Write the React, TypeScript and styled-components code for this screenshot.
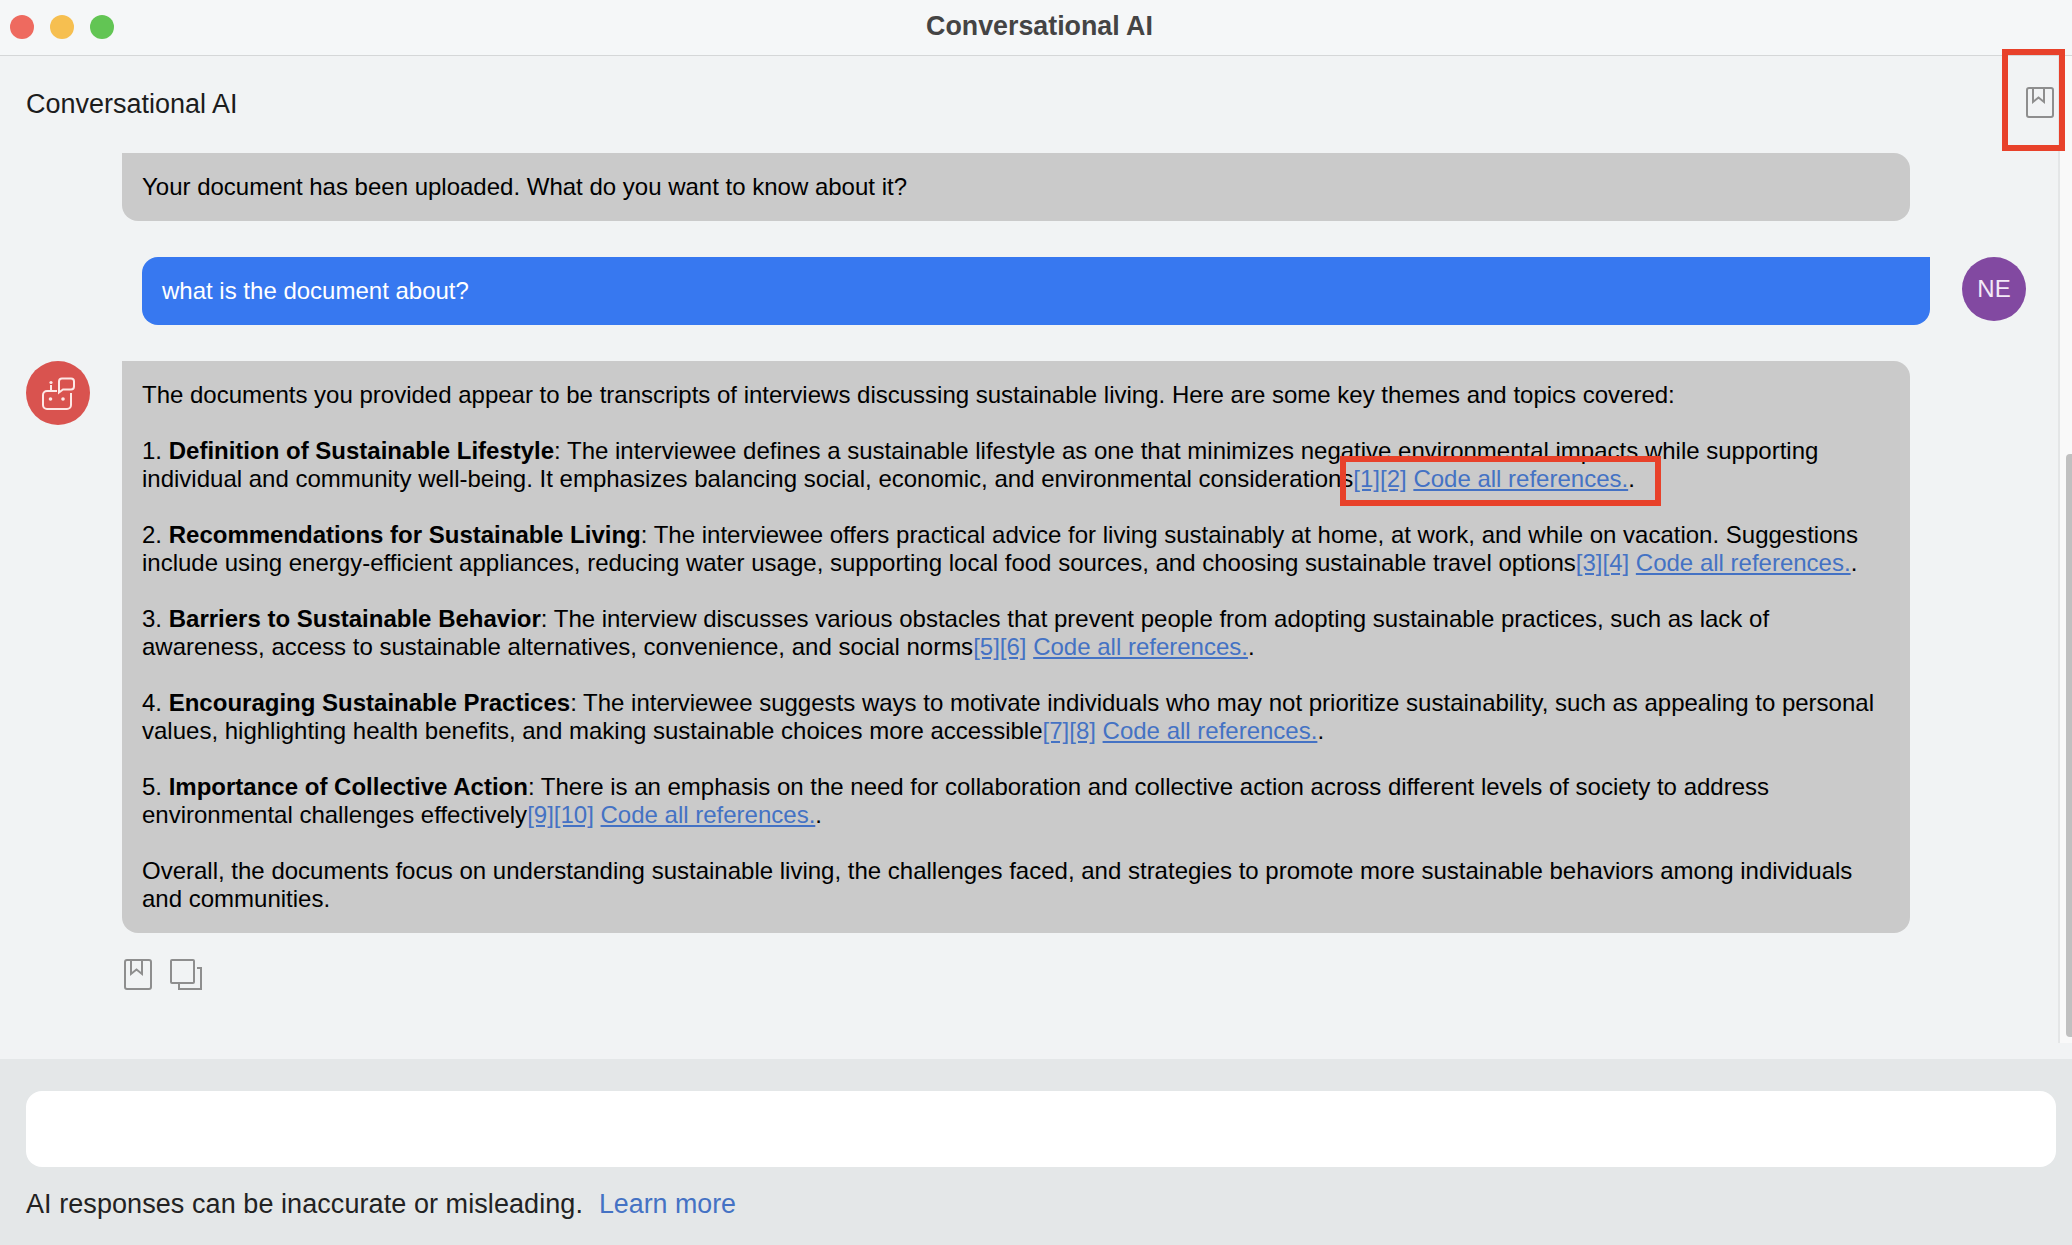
import React from "react";
import styled, { createGlobalStyle } from "styled-components";

const GlobalStyle = createGlobalStyle`
	html, body {
		margin: 0;
		padding: 0;
		background: #f1f3f4;
	}
	* {
		box-sizing: border-box;
	}
`;

const Window = styled.div`
	position: relative;
	display: flex;
	flex-direction: column;
	width: 2072px;
	height: 1245px;
	overflow: hidden;
	font-family: "Liberation Sans", Arial, sans-serif;
	background: #f1f3f4;
`;

const TitleBar = styled.header`
	display: grid;
	grid-template-columns: 1fr auto 1fr;
	align-items: center;
	flex: 0 0 56px;
	padding: 0 0 2px 10px;
	background: #f5f7f8;
	border-bottom: 1px solid #d5d7d8;
`;

const Lights = styled.div`
	display: flex;
	gap: 16px;
`;

const Light = styled.span<{ $color: string }>`
	width: 24px;
	height: 24px;
	border-radius: 50%;
	background: ${({ $color }) => $color};
`;

const WindowTitle = styled.h1`
	margin: 0 0 0 -3px;
	font-size: 26.8px;
	font-weight: 700;
	color: #444;
`;

const Body = styled.div`
	display: flex;
	flex: 1;
	min-height: 0;
`;

const Content = styled.main`
	display: flex;
	flex-direction: column;
	flex: 1;
	min-width: 0;
`;

const PageHeader = styled.div`
	display: flex;
	align-items: center;
	justify-content: space-between;
	height: 97px;
	padding: 0 4px 0 26px;
`;

const PageTitle = styled.h2`
	margin: 0;
	font-size: 27px;
	font-weight: 400;
	color: #1c1c1c;
`;

const HeaderAction = styled.div`
	display: flex;
	margin-bottom: 4px;
`;

const Row = styled.div<{ $user?: boolean }>`
	display: flex;
	align-items: flex-start;
	gap: 32px;
	padding: ${({ $user }) => ($user ? "0 32px 0 142px" : "0 148px 0 26px")};
	margin-bottom: 36px;
`;

const AvatarSlot = styled.div`
	flex: 0 0 64px;
`;

const Avatar = styled.div<{ $color: string }>`
	display: flex;
	align-items: center;
	justify-content: center;
	flex: 0 0 64px;
	width: 64px;
	height: 64px;
	border-radius: 50%;
	background: ${({ $color }) => $color};
	color: #f3e9f7;
	font-size: 24px;
`;

const Bubble = styled.div<{ $user?: boolean }>`
	flex: 1;
	min-width: 0;
	padding: 20px;
	font-size: 24px;
	line-height: 28px;
	color: ${({ $user }) => ($user ? "#fff" : "#000")};
	background: ${({ $user }) => ($user ? "#3778f0" : "#cacaca")};
	border-radius: ${({ $user }) =>
		$user ? "16px 0 16px 16px" : "0 16px 16px 16px"};
`;

const Paragraph = styled.p`
	margin: 0 0 28px;

	&:last-child {
		margin-bottom: 0;
	}
`;

const Ref = styled.a`
	color: #4472c4;
	text-decoration: underline;
`;

const Actions = styled.div`
	display: flex;
	gap: 18px;
	margin: -10px 0 0 124px;
`;

const Rail = styled.div`
	flex: 0 0 14px;
	margin-bottom: 16px;
	padding: 398px 0 0 6px;
	background: #f9f9f9;
	border-left: 2px solid #e4e6e7;
`;

const Thumb = styled.div`
	width: 6px;
	height: 583px;
	border-radius: 4px 0 0 4px;
	background: #c0c0c0;
`;

const Footer = styled.footer`
	flex: 0 0 186px;
	padding: 32px 16px 0 26px;
	background: #e4e7e8;
`;

const Input = styled.div`
	height: 76px;
	border-radius: 16px;
	background: #fff;
`;

const Disclaimer = styled.div`
	display: flex;
	gap: 16px;
	margin-top: 22px;
	font-size: 27px;
	line-height: 30px;
	color: #222;
`;

const DisclaimerText = styled.span`
	letter-spacing: 0.07px;
`;

const LearnMore = styled.a`
	font-size: 26.8px;
	color: #4472c4;
`;

const Callout = styled.div<{ $x: number; $y: number; $w: number; $h: number }>`
	position: absolute;
	left: ${({ $x }) => $x}px;
	top: ${({ $y }) => $y}px;
	width: ${({ $w }) => $w}px;
	height: ${({ $h }) => $h}px;
	border: 6px solid #e8412a;
`;

const BookmarkIcon = () => (
	<svg width="28" height="31" viewBox="0 0 28 31" fill="none" stroke="#8e8e8e" strokeWidth="2">
		<rect x="1" y="1" width="26" height="29" rx="2" />
		<path d="M7 1v14l5.5-4.5L18 15V1" />
	</svg>
);

const CopyIcon = () => (
	<svg width="32" height="31" viewBox="0 0 32 31" fill="none" stroke="#8e8e8e" strokeWidth="2">
		<rect x="1" y="1" width="23" height="23" rx="1" />
		<path d="M27 9h4v21H9v-5" />
	</svg>
);

const BotIcon = () => (
	<svg width="64" height="64" viewBox="0 0 64 64" fill="none" stroke="#fde8e6" strokeWidth="2">
		<path d="M31 30H21a4 4 0 0 0-4 4v10a4 4 0 0 0 4 4h20a4 4 0 0 0 4-4V32" />
		<path d="M25 24v6" />
		<circle cx="25" cy="21.5" r="1.6" fill="#fde8e6" stroke="none" />
		<circle cx="24.5" cy="38" r="1.8" fill="#fde8e6" stroke="none" />
		<circle cx="37" cy="38" r="1.8" fill="#fde8e6" stroke="none" />
		<path d="M36 17.5h9a3 3 0 0 1 3 3v5a3 3 0 0 1-3 3h-8l-4 3v-11a3 3 0 0 1 3-3z" />
	</svg>
);

const points = [
	{
		title: "Definition of Sustainable Lifestyle",
		text: ": The interviewee defines a sustainable lifestyle as one that minimizes negative environmental impacts while supporting individual and community well-being. It emphasizes balancing social, economic, and environmental considerations",
		refs: "[1][2]",
	},
	{
		title: "Recommendations for Sustainable Living",
		text: ": The interviewee offers practical advice for living sustainably at home, at work, and while on vacation. Suggestions include using energy-efficient appliances, reducing water usage, supporting local food sources, and choosing sustainable travel options",
		refs: "[3][4]",
	},
	{
		title: "Barriers to Sustainable Behavior",
		text: ": The interview discusses various obstacles that prevent people from adopting sustainable practices, such as lack of awareness, access to sustainable alternatives, convenience, and social norms",
		refs: "[5][6]",
	},
	{
		title: "Encouraging Sustainable Practices",
		text: ": The interviewee suggests ways to motivate individuals who may not prioritize sustainability, such as appealing to personal values, highlighting health benefits, and making sustainable choices more accessible",
		refs: "[7][8]",
	},
	{
		title: "Importance of Collective Action",
		text: ": There is an emphasis on the need for collaboration and collective action across different levels of society to address environmental challenges effectively",
		refs: "[9][10]",
	},
];

export default function App() {
	return (
		<Window>
			<GlobalStyle />
			<TitleBar>
				<Lights>
					<Light $color="#ee6a5f" />
					<Light $color="#f6bf50" />
					<Light $color="#62c554" />
				</Lights>
				<WindowTitle>Conversational AI</WindowTitle>
				<div />
			</TitleBar>
			<Body>
				<Content>
					<PageHeader>
						<PageTitle>Conversational AI</PageTitle>
						<HeaderAction>
							<BookmarkIcon />
						</HeaderAction>
					</PageHeader>
					<Row>
						<AvatarSlot />
						<Bubble>Your document has been uploaded. What do you want to know about it?</Bubble>
					</Row>
					<Row $user>
						<Bubble $user>what is the document about?</Bubble>
						<Avatar $color="#8249a1">NE</Avatar>
					</Row>
					<Row>
						<AvatarSlot>
							<Avatar $color="#d9534f">
								<BotIcon />
							</Avatar>
						</AvatarSlot>
						<Bubble>
							<Paragraph>
								The documents you provided appear to be transcripts of interviews discussing sustainable living. Here are some key themes and topics covered:
							</Paragraph>
							{points.map((point, i) => (
								<Paragraph key={point.title}>
									{i + 1}. <b>{point.title}</b>
									{point.text}
									<Ref>{point.refs}</Ref> <Ref>Code all references.</Ref>.
								</Paragraph>
							))}
							<Paragraph>
								Overall, the documents focus on understanding sustainable living, the challenges faced, and strategies to promote more sustainable behaviors among individuals and communities.
							</Paragraph>
						</Bubble>
					</Row>
					<Actions>
						<BookmarkIcon />
						<CopyIcon />
					</Actions>
				</Content>
				<Rail>
					<Thumb />
				</Rail>
			</Body>
			<Footer>
				<Input />
				<Disclaimer>
					<DisclaimerText>AI responses can be inaccurate or misleading.</DisclaimerText>
					<LearnMore>Learn more</LearnMore>
				</Disclaimer>
			</Footer>
			<Callout $x={2002} $y={49} $w={63} $h={102} />
			<Callout $x={1340} $y={456} $w={321} $h={50} />
		</Window>
	);
}
